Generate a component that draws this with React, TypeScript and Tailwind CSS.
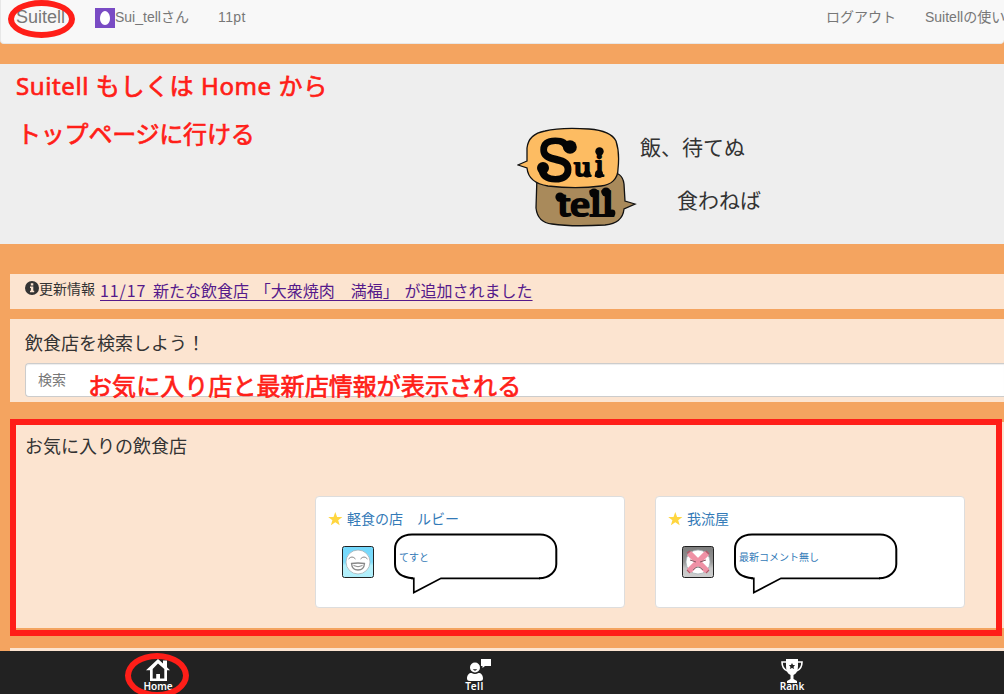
import React from "react";

const sans = "font-['Liberation_Sans','Noto_Sans_CJK_JP',sans-serif]";
const annotation =
  "absolute whitespace-nowrap font-['Noto_Sans','Noto_Sans_CJK_JP',sans-serif] text-[24px] leading-[32px] font-normal text-[#ff1e18] [-webkit-text-stroke:0.7px_#ff1e18]";

function Logo() {
  return (
    <svg width="120" height="102" viewBox="0 0 120 102" className="shrink-0">
      <path d="M20 50 C20 45 25 45 34 46 L92 46 C102 46 106 50 107 58 L108 75 L118 78 L107 83 C106 93 99 98 88 99 C70 100 48 100 35 98 C25 97 20 91 19 82Z" fill="#a98a5b" stroke="#111" strokeWidth="1.3" />
      <path d="M10 35 L1 39 L10 42 C11 52 18 58 31 60 C48 62 69 62 84 60 C94 59 101 53 101 43 C102 34 102 24 99 15 C95 7 85 4 72 3 C56 2 40 2 28 5 C17 7 11 13 10 22Z" fill="#fdbc62" stroke="#111" strokeWidth="1.3" />
      <g fill="#050505" stroke="#050505" strokeLinejoin="round" strokeLinecap="round">
        <g fontFamily="Liberation Sans, sans-serif">
          <text x="20" y="54.500" fontSize="62" strokeWidth="2.2" textLength="36" lengthAdjust="spacingAndGlyphs">S</text>
        </g>
        <g fontFamily="Liberation Serif, serif">
          <text x="57" y="50" fontSize="27" strokeWidth="1.8" textLength="17" lengthAdjust="spacingAndGlyphs">u</text>
          <text x="78" y="50" fontSize="32" strokeWidth="2">i</text>
          <text x="41" y="90" fontSize="36" strokeWidth="2.2" textLength="56" lengthAdjust="spacingAndGlyphs">tell</text>
        </g>
      </g>
      <g fill="#050505">
        <circle cx="53" cy="21" r="6.8" />
        <circle cx="26" cy="42" r="6" />
        <circle cx="82.500" cy="25.500" r="4.2" />
        <circle cx="82" cy="48" r="4" />
        <circle cx="70" cy="48" r="3.6" />
        <circle cx="43" cy="71" r="4.6" />
        <circle cx="77" cy="67" r="4.6" />
        <circle cx="89" cy="66" r="4.6" />
        <circle cx="95" cy="87" r="3.4" />
      </g>
    </svg>
  );
}

function Face({ happy }: { happy: boolean }) {
  return (
    <svg width="32" height="32" viewBox="0 0 32 32" className="shrink-0">
      <defs>
        <linearGradient id="sky" x2="0" y2="1">
          <stop stopColor="#72d8fc" />
          <stop offset=".5" stopColor="#7edcfb" />
          <stop offset=".62" stopColor="#b5f1fc" />
          <stop offset="1" stopColor="#b0effb" />
        </linearGradient>
        <linearGradient id="ash" x2="0" y2="1">
          <stop stopColor="#7c7c7c" />
          <stop offset=".5" stopColor="#969696" />
          <stop offset=".7" stopColor="#c5c5c5" />
          <stop offset="1" stopColor="#cecece" />
        </linearGradient>
      </defs>
      <rect x=".5" y=".5" width="31" height="31" rx="2" fill={happy ? "url(#sky)" : "url(#ash)"} stroke="#222" />
      <circle cx="16" cy="16" r="12" fill="#fff" stroke="#a6b1b6" strokeWidth=".8" />
      {happy ? (
        <g fill="none" stroke="#888" strokeWidth="1">
          <path d="M6.500 13Q10 9 13.500 13M18.500 13Q22 9 25.500 13" />
          <path d="M9.500 17.500Q16 16.500 22.500 17.500Q22 24 16 24Q10 24 9.500 17.500Z" strokeWidth="1.3" />
          <path d="M11.500 19.500Q16 22 20.500 19.500" />
        </g>
      ) : (
        <g fill="none">
          <path d="M7 7L25 25M25 7L7 25" stroke="#ef91a5" strokeWidth="6" />
          <path d="M8 14L14 16M24 14L18 16" stroke="#8a5b66" />
          <path d="M11 24Q16 18 21 24" stroke="#777" />
          <path d="M5 7L8 5M24 5L27 8M5 24L8 27M24 27L27 24" stroke="#b85568" strokeWidth="1.2" />
        </g>
      )}
    </svg>
  );
}

function Shop({ name, comment, happy }: { name: string; comment: string; happy: boolean }) {
  return (
    <div className="h-28 w-[310px] rounded border border-[#ddd] bg-white px-3 pt-3">
      <div className="flex h-5 items-center text-sm leading-5 text-[#337ab7]">
        <svg width="15" height="14" viewBox="0 0 15 14" className="mr-1">
          <path d="M7.3 0L9.1 5H14.4L10.2 8.2L11.7 13.2L7.3 10.2L2.9 13.2L4.4 8.2L.2 5H5.5Z" fill="#ffd63f" />
        </svg>
        {name}
      </div>
      <div className="flex pl-[14px]">
        <div className="pt-[17px]"><Face happy={happy} /></div>
        <div className="relative ml-[19px] mt-1 h-[62px] w-[165px]">
          <svg width="165" height="62" viewBox="0 0 165 62" fill="none">
            <path d="M18 45.3H20.8V59.5L48 45.3H147" stroke="#000" strokeWidth="1.7" />
            <path d="M20 45.3C6 44 2 38 2 31V16C2 8 8 1.5 19 1.5H147C157 1.5 163.3 9 163.3 16V31C163.3 38 157 45.3 146 45.3" stroke="#000" strokeWidth="2" />
          </svg>
          <span className="absolute left-[6px] top-[17px] whitespace-nowrap text-[10px] leading-[15px] text-[#337ab7]">{comment}</span>
        </div>
      </div>
    </div>
  );
}

const tabLabel = "font-['Noto_Sans',sans-serif] text-[10px] leading-[10px] font-semibold text-white";

export default function App() {
  return (
    <div className={`relative flex h-[694px] w-[1004px] flex-col overflow-hidden bg-[#f4a460] text-[#333] ${sans}`}>
      <nav className="flex h-11 shrink-0 rounded-b border-b border-l border-[#e7e7e7] bg-[#f8f8f8] pl-[15px] text-sm leading-5 text-[#777]">
        <span className="w-[79px] pt-[7px] text-lg leading-5">Suitell</span>
        <span className="flex w-[123px] items-start pt-[7px]">
          <svg width="20" height="20" className="mt-px shrink-0">
            <rect width="20" height="20" fill="#794bc4" />
            <path d="M10 3C13 3 15 7 15 10.5C15 14 13 17 10 17C7 17 5 14 5 10.5C5 7 7 3 10 3Z" fill="#fff" />
          </svg>
          <span className="whitespace-nowrap">Sui_tellさん</span>
        </span>
        <span className="pt-[7px] tracking-[0.4px]">11pt</span>
        <span className="ml-auto w-[99px] shrink-0 pt-[7px]">ログアウト</span>
        <span className="w-[79px] shrink-0 overflow-hidden whitespace-nowrap pt-[7px]">Suitellの使い方</span>
      </nav>

      <header className="mt-5 flex h-[180px] shrink-0 bg-[#eee] pl-[517px] pt-[62px]">
        <Logo />
        <div className="pl-[3px] pt-[7px] text-[21px] leading-[30px]">
          <p>飯、待てぬ</p>
          <p className="mt-[23px] pl-[37px]">食わねば</p>
        </div>
      </header>

      <section className="ml-[10px] mt-[30px] flex h-[35px] shrink-0 bg-[#fce4d0] pl-[15px]">
        <svg width="14" height="14" viewBox="0 0 14 14" className="mt-[7px]">
          <circle cx="7" cy="7" r="7" fill="#333" />
          <path d="M5.8 2.2H8.3V4.4H5.8ZM5 5.5H8.3V9.8H9.2V11.3H5V9.8H5.9V7H5Z" fill="#fce4d0" />
        </svg>
        <span className="w-[61px] whitespace-nowrap pt-[5px] text-sm leading-5">更新情報</span>
        <a className="mt-1 h-6 whitespace-nowrap font-['Noto_Sans_CJK_JP',sans-serif] text-base leading-6 text-[#551a8b] underline underline-offset-[3px] [word-spacing:2.2px]">
          <span className="tracking-[0.9px]">11/17 </span>新たな飲食店 「大衆焼肉　満福」 が追加されました
        </a>
      </section>

      <section className="ml-[10px] mt-[10px] h-[83px] shrink-0 bg-[#fce4d0] pl-[15px] pt-[15px]">
        <h2 className="text-lg leading-5">飲食店を検索しよう！</h2>
        <div className="mt-[9px] h-[34px] rounded-l border border-r-0 border-[#ccc] bg-white px-3 pt-[6px] text-sm leading-5 text-[#777] shadow-[inset_0_1px_1px_rgba(0,0,0,0.075)]">検索</div>
      </section>

      <section className="ml-[10px] mt-5 h-[206px] shrink-0 bg-[#fce4d0] pl-[15px] pt-[15px]">
        <h2 className="text-lg leading-5">お気に入りの飲食店</h2>
        <div className="mt-[39px] flex gap-[30px] pl-[290px]">
          <Shop name="軽食の店　ルビー" comment="てすと" happy />
          <Shop name="我流屋" comment="最新コメント無し" happy={false} />
        </div>
      </section>

      <div className="ml-[10px] mt-5 h-[3px] shrink-0 bg-[#fce4d0]" />

      <footer className="flex h-[43px] shrink-0 bg-[#222]">
        <div className="flex w-[316px] flex-col items-center pt-2">
          <svg width="26" height="22" viewBox="0 0 26 22">
            <path d="M13 0L18 4.600V1.500H22V8.300L25 11.200H22V22H5V11.200H1Z" fill="#fff" />
            <path d="M13 4.500L19.300 10V19.500H15V15H11.200V19.500H7.700V10Z" fill="#222" />
          </svg>
          <span className={tabLabel}>Home</span>
        </div>
        <div className="flex w-[317px] flex-col items-center pt-2">
          <svg width="26" height="22" viewBox="0 0 26 22" className="ml-2">
            <circle cx="9" cy="8.5" r="5" fill="#fff" />
            <path d="M6.800 10.300H11.200Q9 13 6.800 10.300Z" fill="#222" />
            <path d="M1 19.500C1 16 3 14 5.500 14Q9 16 12.500 14C15 14 17 16 17 19.500Q17 22 14 22H4Q1 22 1 19.500Z" fill="#fff" />
            <path d="M15 0H25V7H19L16.500 9L16.500 7H15Z" fill="#fff" />
          </svg>
          <span className={`${tabLabel} tracking-[0.5px]`}>Tell</span>
        </div>
        <div className="flex w-[318px] flex-col items-center pt-2">
          <svg width="22" height="24" viewBox="0 0 22 24" className="-mb-0.5">
            <path d="M5 0H17V7Q17 14 12.500 16V20L16 22V24H6V22L9.500 20V16Q5 14 5 7Z" fill="#fff" />
            <path d="M5 3H1Q1 10 6.500 12M17 3H21Q21 10 15.500 12" fill="none" stroke="#fff" strokeWidth="1.6" />
            <path d="M11 4L12 6H14L12.500 8L13.200 10L11 9L8.800 10L9.500 8L8 6H10Z" fill="#222" />
          </svg>
          <span className={tabLabel}>Rank</span>
        </div>
      </footer>

      <p className={`${annotation} left-4 top-[70px] tracking-[0.6px]`}>Suitell もしくは Home から</p>
      <p className={`${annotation} left-[17px] top-[118px] tracking-[-0.2px]`}>トップページに行ける</p>
      <p className={`${annotation} left-[88px] top-[370px] tracking-[0.07px]`}>お気に入り店と最新店情報が表示される</p>
      <div className="absolute left-[8px] top-0 h-[38px] w-[67px] rounded-[50%] border-[6px] border-[#ff1e18]" />
      <div className="absolute left-[125px] top-[653px] h-[45px] w-16 rounded-[50%] border-[6px] border-[#ff1e18]" />
      <div className="absolute left-[10px] top-[419px] h-[217px] w-[992px] border-[6px] border-[#ff1e18]" />
    </div>
  );
}
